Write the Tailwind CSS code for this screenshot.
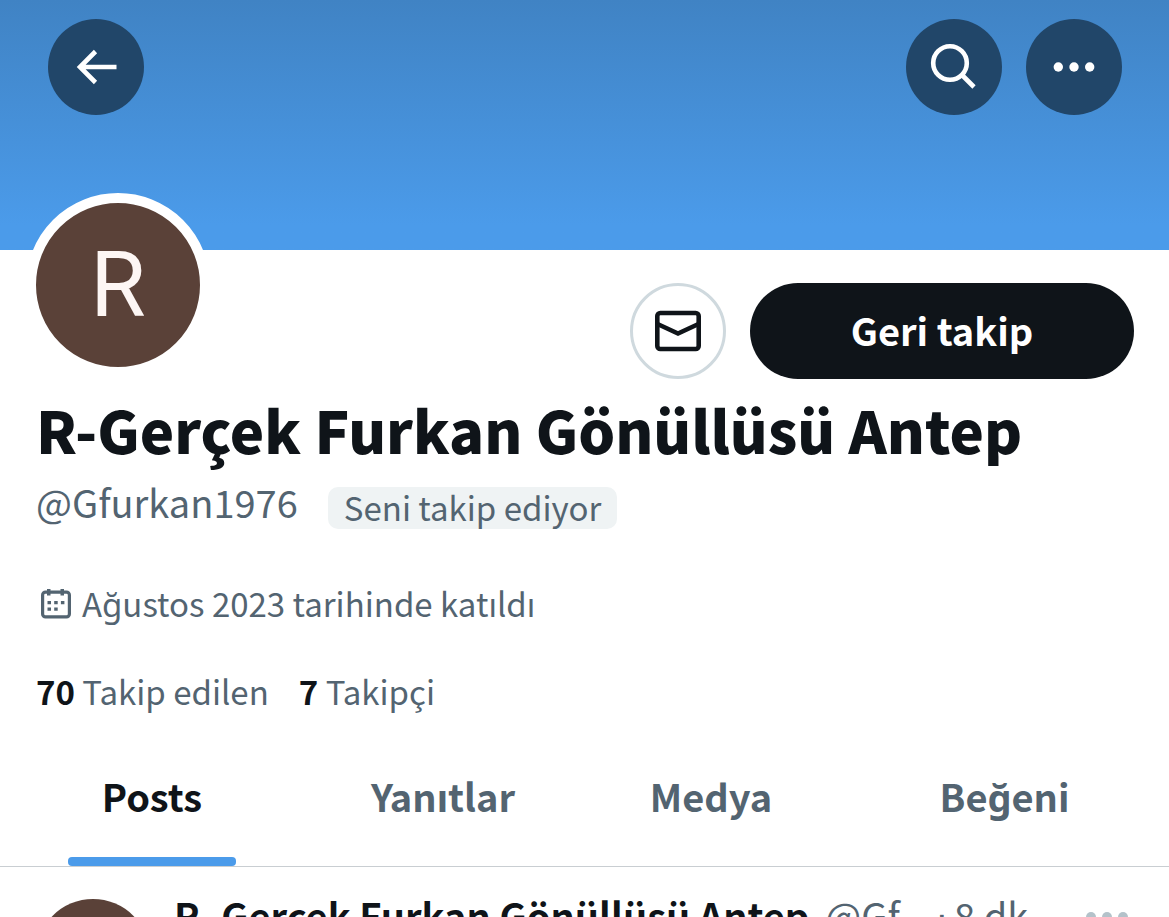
<!DOCTYPE html>
<html lang="tr">
<head>
<meta charset="utf-8">
<meta name="viewport" content="width=device-width, initial-scale=1">
<title>R-Gerçek Furkan Gönüllüsü Antep</title>
<script src="https://cdn.jsdelivr.net/npm/@tailwindcss/browser@4"></script>
</head>
<body class="bg-white font-['Noto_Sans_CJK_SC','Noto_Sans',sans-serif] text-[#536471]">
<div class="h-screen overflow-hidden">
  <header class="flex h-[250px] items-start gap-6 bg-linear-to-b from-[#4083c4] to-[#4b9bea] to-90% pt-[19px] pr-[47px] pl-12">
    <button aria-label="Geri" class="mr-auto size-24 rounded-full bg-[#214669] text-white">
      <svg viewBox="0 0 96 96" class="size-full" fill="none" stroke="currentColor" stroke-width="4.6"><path d="M68.500 48H32M47.500 32.500L32 48L47.500 63.500"/></svg>
    </button>
    <button aria-label="Ara" class="size-24 rounded-full bg-[#214669] text-white">
      <svg viewBox="0 0 96 96" class="size-full" fill="none" stroke="currentColor" stroke-width="4.6"><circle cx="44" cy="44" r="16.800"/><path d="M56 56L68 68"/></svg>
    </button>
    <button aria-label="Daha fazla" class="size-24 rounded-full bg-[#214669] text-white">
      <svg viewBox="0 0 96 96" class="size-full" fill="currentColor"><circle cx="32.300" cy="48" r="4.700"/><circle cx="48" cy="48" r="4.700"/><circle cx="63.700" cy="48" r="4.700"/></svg>
    </button>
  </header>

  <main>
    <section>
      <div class="relative -mt-[57px] flex items-end gap-6 pr-[35px] pl-[26px]">
        <div class="mr-auto mb-[2px] flex size-[184px] items-center justify-center rounded-full border-[10px] border-white bg-[#5a4138] font-['Roboto',sans-serif] text-[90px] text-[#fdf6f4]">R</div>
        <button aria-label="Mesaj" class="size-24 rounded-full border-[3px] border-[#cfd9de] text-[#0f1419]">
          <svg viewBox="3 3 90 90" class="size-full" fill="none" stroke="currentColor" stroke-width="4.600"><rect x="27.300" y="30" width="41.400" height="36" rx="3"/><path d="M27.500 41L48 50.500L68.500 41"/></svg>
        </button>
        <button class="h-24 w-96 rounded-full bg-[#0f1419] pb-1 text-[38px] font-bold text-white">Geri takip</button>
      </div>

      <div class="px-9">
        <h1 class="mt-3 text-[58px] leading-[76px] font-black whitespace-nowrap text-[#0f1419]">R-Gerçek Furkan Gönüllüsü Antep</h1>
        <div class="mt-2 flex items-center gap-[30px]">
          <span class="text-[38px] leading-[52px]">@Gfurkan1976</span>
          <span class="mt-3 rounded-[10px] bg-[#eff3f4] px-4 pb-[2px] text-[33px] leading-[40px]">Seni takip ediyor</span>
        </div>
        <p class="mt-[50px] flex items-center gap-2 text-[33px] leading-[48px]">
          <svg viewBox="0 0 38 38" class="size-[38px]" fill="currentColor" fill-rule="evenodd"><path d="M11 6.500V5h3.500v1.500h10V5H28v1.500h2.500A4.500 4.500 0 0 1 35 11v19a4.500 4.500 0 0 1-4.500 4.500h-21A4.500 4.500 0 0 1 5 30V11a4.500 4.500 0 0 1 4.500-4.500zM11 9.700H9.500A1.300 1.300 0 0 0 8.200 11v19a1.300 1.300 0 0 0 1.300 1.300h21a1.300 1.300 0 0 0 1.300-1.300V11a1.300 1.300 0 0 0-1.300-1.300H28v1.800h-3.500V9.700h-10v1.800H11zM11.500 17h3.500v3.300h-3.500zM18.200 17h3.500v3.300h-3.500zM24.900 17h3.500v3.300h-3.500zM11.500 23.500h3.500v3.300h-3.500zM18.200 23.500h3.500v3.300h-3.500z"/></svg>
          Ağustos 2023 tarihinde katıldı
        </p>
        <div class="mt-10 flex gap-[30px] text-[33px] leading-[48px]">
          <a href="#"><b class="text-[#0f1419]">70</b> Takip edilen</a>
          <a href="#"><b class="text-[#0f1419]">7</b> Takipçi</a>
        </div>
      </div>
    </section>

    <nav class="mt-5 grid h-[132px] grid-cols-[304fr_278fr_258fr_329fr] border-b border-[#c9ced2] text-[38px] font-bold">
      <a href="#" class="flex flex-col items-center text-[#0f1419]"><span class="flex h-[122px] items-center px-8 pb-[2px]">Posts</span><span class="h-[9px] w-[168px] rounded bg-[#4b9bea]"></span></a>
      <a href="#" class="flex h-[122px] items-center justify-center pb-[2px]">Yanıtlar</a>
      <a href="#" class="flex h-[122px] items-center justify-center pb-[2px]">Medya</a>
      <a href="#" class="flex h-[122px] items-center justify-center pb-[2px]">Beğeni</a>
    </nav>

    <article class="flex gap-6 pt-5 pr-10 pl-9 text-[38px] leading-[56px]">
      <div class="mt-3 size-[114px] shrink-0 rounded-full bg-[#5a4138]"></div>
      <div class="flex grow items-start whitespace-nowrap">
        <b class="mr-4 text-[#0f1419]">R- Gerçek Furkan Gönüllüsü Antep</b>
        <span>@Gf...</span>
        <span class="mx-[6px] font-['Liberation_Sans',sans-serif]">·</span>
        <span>8 dk</span>
        <button aria-label="Gönderi seçenekleri" class="mt-5 ml-auto text-[#b4c2ca]">
          <svg viewBox="0 0 44 20" class="h-5 w-11" fill="currentColor"><circle cx="6" cy="10" r="5"/><circle cx="22" cy="10" r="5"/><circle cx="38" cy="10" r="5"/></svg>
        </button>
      </div>
    </article>
  </main>
</div>
</body>
</html>
